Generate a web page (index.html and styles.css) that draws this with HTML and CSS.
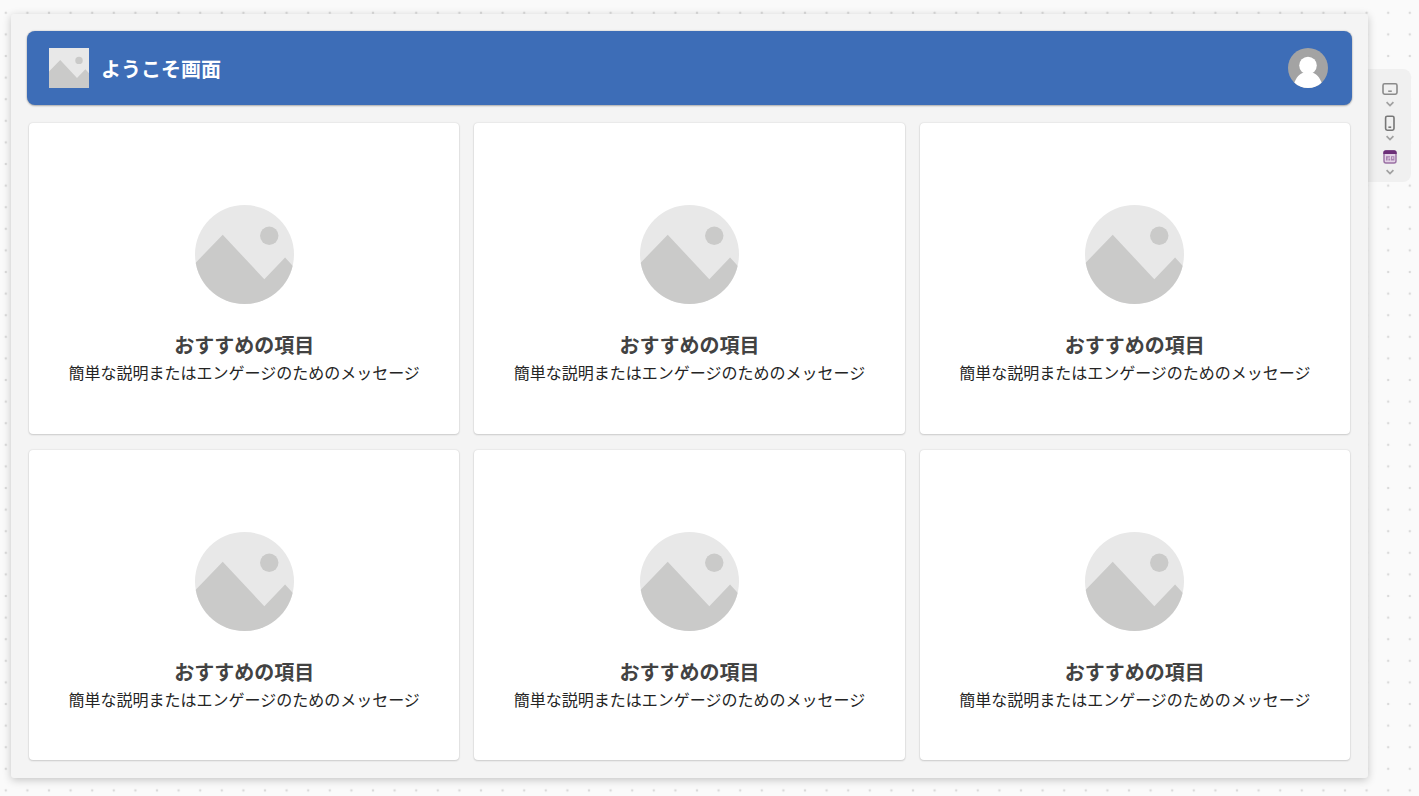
FILE: index.html
```
<!DOCTYPE html>
<html lang="ja">

<head>
    <meta charset="utf-8">
    <meta name="viewport" content="width=device-width, initial-scale=1">
    <title>ようこそ画面</title>
    <link rel="stylesheet" href="styles.css">
</head>

<body>
    <!-- shared placeholder picture -->
    <svg class="defs" width="0" height="0" aria-hidden="true">
        <symbol id="picture" viewBox="0 0 100 100">
            <rect width="100" height="100" fill="#e8e8e8" />
            <path d="M0 59 L28 30 L70 75 L91 53 L100 63 V100 H0 Z" fill="#cacac9" />
            <circle cx="75" cy="31" r="9.3" fill="#cacac9" />
        </symbol>
        <symbol id="chevron" viewBox="0 0 8 8">
            <path d="M0.6 2.2 L4 5.6 L7.4 2.2" fill="none" stroke="#a0a0a0" stroke-width="1.7" />
        </symbol>
    </svg>

    <div class="canvas">
        <main class="screen">
            <header class="header">
                <svg class="logo"><use href="#picture" /></svg>
                <h1>ようこそ画面</h1>
                <svg class="avatar" viewBox="0 0 40 40">
                    <rect width="40" height="40" fill="#a3a3a3" />
                    <circle cx="20" cy="17.5" r="8.8" fill="#fff" />
                    <path d="M6 36 C8 29 12 25.5 16 24.5 V22 H24 V24.5 C28 25.5 32 29 34 36 V40 H6 Z" fill="#fff" />
                </svg>
            </header>

            <div class="cards">
                <section class="card">
                    <svg class="thumb"><use href="#picture" /></svg>
                    <h2>おすすめの項目</h2>
                    <p>簡単な説明またはエンゲージのためのメッセージ</p>
                </section>
                <section class="card">
                    <svg class="thumb"><use href="#picture" /></svg>
                    <h2>おすすめの項目</h2>
                    <p>簡単な説明またはエンゲージのためのメッセージ</p>
                </section>
                <section class="card">
                    <svg class="thumb"><use href="#picture" /></svg>
                    <h2>おすすめの項目</h2>
                    <p>簡単な説明またはエンゲージのためのメッセージ</p>
                </section>
                <section class="card">
                    <svg class="thumb"><use href="#picture" /></svg>
                    <h2>おすすめの項目</h2>
                    <p>簡単な説明またはエンゲージのためのメッセージ</p>
                </section>
                <section class="card">
                    <svg class="thumb"><use href="#picture" /></svg>
                    <h2>おすすめの項目</h2>
                    <p>簡単な説明またはエンゲージのためのメッセージ</p>
                </section>
                <section class="card">
                    <svg class="thumb"><use href="#picture" /></svg>
                    <h2>おすすめの項目</h2>
                    <p>簡単な説明またはエンゲージのためのメッセージ</p>
                </section>
            </div>
        </main>

        <div class="tools">
            <button type="button" aria-label="タブレット">
                <svg class="icon" viewBox="0 0 16 16">
                    <rect x="1" y="2.8" width="14" height="10.4" rx="1.6" fill="none" stroke="#8a8a8a" stroke-width="1.6" />
                    <path d="M6.2 10.2 H9.8" stroke="#8a8a8a" stroke-width="1.5" />
                </svg>
                <svg class="chevron"><use href="#chevron" /></svg>
            </button>
            <button type="button" aria-label="電話">
                <svg class="icon" viewBox="0 0 16 16">
                    <rect x="3.6" y="1.2" width="8.4" height="14" rx="1.6" fill="none" stroke="#777" stroke-width="1.6" />
                    <path d="M6.4 12.2 H9.2" stroke="#777" stroke-width="1.6" />
                </svg>
                <svg class="chevron"><use href="#chevron" /></svg>
            </button>
            <button type="button" aria-label="画面">
                <svg class="icon" viewBox="0 0 16 16">
                    <rect x="2" y="2" width="12" height="12" rx="2" fill="#e3d3e6" stroke="#9a70a4" stroke-width="1.4" />
                    <path d="M1.3 5 V4 Q1.3 1.3 4 1.3 H12 Q14.7 1.3 14.7 4 V5 Z" fill="#6c2f78" />
                    <path d="M4 7.2 H8 V8.6 H5.6 V11.6 H4 Z M9 7.2 H12.4 V11.6 H9 Z M6.4 9.6 H8.2 V11.6 H6.4 Z" fill="#a982b1" />
                    <path d="M10 8.2 H11.4 V9.8 H10 Z" fill="#e3d3e6" />
                </svg>
                <svg class="chevron"><use href="#chevron" /></svg>
            </button>
        </div>
    </div>
</body>

</html>
```

FILE: styles.css
```
* {
    box-sizing: border-box;
}

body {
    margin: 0;
    font-family: "Noto Sans CJK JP", sans-serif;
    background-color: #fafafa;
}

.defs {
    position: absolute;
}

/* Dotted editor canvas */
.canvas {
    display: flex;
    min-height: 100vh;
    padding: 14px 8px 18px 11px;
    background-image: url('data:image/svg+xml,<svg xmlns="http://www.w3.org/2000/svg" width="108" height="108" viewBox="0 0 5 5"><pattern id="d" width="1" height="1" patternUnits="userSpaceOnUse"><circle cx=".5" cy=".5" r=".06" fill="%23dadada"/></pattern><rect width="5" height="5" fill="url(%23d)"/></svg>');
    background-position: -5px 2px;
}

.screen {
    flex: 1;
    display: flex;
    flex-direction: column;
    padding: 17px 16px 18px;
    background: #f4f4f4;
    border-radius: 3px;
    box-shadow: 0 2px 8px rgba(0, 0, 0, 0.22);
    z-index: 1;
}

/* Header */
.header {
    display: flex;
    align-items: center;
    gap: 12px;
    height: 74px;
    padding: 0 24px 0 22px;
    background: #3d6db7;
    color: #fff;
    border-radius: 8px;
    box-shadow: 0 0 2px rgba(0, 0, 0, 0.2), 0 1px 2px rgba(0, 0, 0, 0.25);
}

.header h1 {
    margin: 0;
    padding-top: 2px;
    font-size: 20px;
    line-height: 28px;
}

.logo,
.avatar {
    width: 40px;
    height: 40px;
}

.avatar {
    margin-left: auto;
    border-radius: 50%;
}

/* Cards */
.cards {
    flex: 1;
    display: grid;
    grid-template-columns: repeat(3, 1fr);
    grid-auto-rows: 1fr;
    gap: 16px 15px;
    margin: 18px 2px 0;
}

.card {
    display: flex;
    flex-direction: column;
    align-items: center;
    justify-content: center;
    padding: 34px 8px 0;
    background: #fff;
    border-radius: 4px;
    box-shadow: 0 0 2px rgba(0, 0, 0, 0.14), 0 1px 2px rgba(0, 0, 0, 0.14);
}

.thumb {
    width: 99px;
    height: 99px;
    border-radius: 50%;
}

.card h2 {
    margin: 27px 0 0;
    color: #424242;
    font-size: 20px;
    line-height: 28px;
}

.card p {
    margin: 0;
    color: #242424;
    font-size: 16px;
    line-height: 26px;
}

/* Device buttons on the right */
.tools {
    display: flex;
    flex-direction: column;
    align-self: flex-start;
    gap: 7px;
    width: 43px;
    margin-top: 55px;
    padding: 12px 0 6px;
    background: #f0f0f0;
    border-radius: 0 8px 8px 0;
}

.tools button {
    display: flex;
    flex-direction: column;
    align-items: center;
    gap: 3px;
    padding: 0;
    border: none;
    background: none;
    cursor: pointer;
}

.icon {
    width: 16px;
    height: 16px;
}

.chevron {
    width: 8px;
    height: 8px;
}
```
